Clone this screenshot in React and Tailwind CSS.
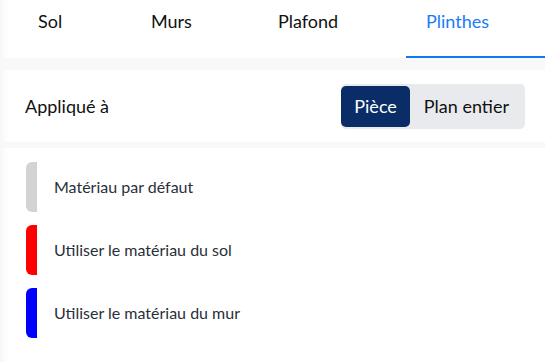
import { useState } from "react";

const tabs = [
  { label: "Sol", box: "w-[151px] pl-[38px]" },
  { label: "Murs", box: "w-[127px]" },
  { label: "Plafond", box: "w-[128px]" },
  { label: "Plinthes", box: "w-[139px] pl-[20px]" },
];

const materials = [
  { label: "Matériau par défaut", color: "bg-[#d3d3d3]" },
  { label: "Utiliser le matériau du sol", color: "bg-[#ff0000]" },
  { label: "Utiliser le matériau du mur", color: "bg-[#0000ff]" },
];

export default function App() {
  const [tab, setTab] = useState("Plinthes");
  const [scope, setScope] = useState("Pièce");

  return (
    <div
      className="w-[545px] h-[362px] overflow-hidden bg-white shadow-[inset_10px_0_8px_-8px_rgba(0,0,0,0.05)]"
      style={{ fontFamily: "Lato, 'Open Sans', sans-serif" }}
    >
      {/* Tabs */}
      <div className="flex h-[58px] items-stretch">
        {tabs.map((t) => {
          const active = t.label === tab;
          return (
            <button
              key={t.label}
              onClick={() => setTab(t.label)}
              className={`${t.box} shrink-0 flex items-start pt-[8px] text-left text-[18px] border-b-2 ${
                active ? "text-[#1a7cf5] border-[#1377f2]" : "text-[#111] border-transparent"
              }`}
            >
              {t.label}
            </button>
          );
        })}
      </div>
      <div className="h-[12px] bg-[#f8f8f8]" />

      {/* Applied to */}
      <div className="flex h-[72px] items-center justify-between pl-[25px] pr-[20px]">
        <span className="text-[18px] text-[#111]">Appliqué à</span>
        <div className="flex h-[45px] rounded-[5px] bg-[#e8eaed] py-[2px] pr-[2px]">
          {["Pièce", "Plan entier"].map((s) => {
            const active = s === scope;
            return (
              <button
                key={s}
                onClick={() => setScope(s)}
                className={`rounded-[5px] text-[18px] ${
                  active ? "bg-[#0b2d67] text-white px-[13px]" : "text-[#111] px-[14px]"
                }`}
              >
                {s}
              </button>
            );
          })}
        </div>
      </div>
      <div className="h-[6px] bg-[#f8f8f8]" />

      {/* Materials */}
      <div className="flex flex-col gap-[13px] pt-[14px] pl-[26px]">
        {materials.map((m) => (
          <div key={m.label} className="flex h-[50px] items-center">
            <div className={`w-[11px] h-full rounded-l-[6px] ${m.color}`} />
            <span className="ml-[17px] text-[16px] text-[#2a2f3a]">{m.label}</span>
          </div>
        ))}
      </div>
    </div>
  );
}
